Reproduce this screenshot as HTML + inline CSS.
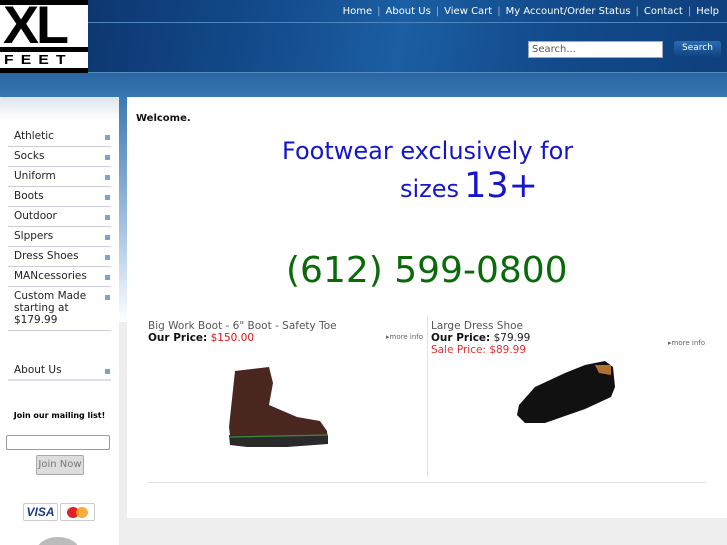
<!DOCTYPE html>
<html><head><style>
*{margin:0;padding:0;box-sizing:border-box}
html,body{width:727px;height:545px;overflow:hidden}
body{background:#eee;font-family:"DejaVu Sans","Liberation Sans",sans-serif;position:relative}
.hdr{position:absolute;left:0;top:0;width:727px;height:73px;background:linear-gradient(100deg,#0b2d63 0%,#134a8a 35%,#1b5ea3 55%,#134b8c 75%,#0f3f7c 100%)}
.band{position:absolute;left:0;top:73px;width:727px;height:24px;background:linear-gradient(#2a66a3,#3777b2)}
.hline{position:absolute;left:88px;top:22px;width:639px;height:1px;background:#4d86c0}
.hline2{position:absolute;left:88px;top:72px;width:639px;height:1px;background:#5a8fc4}
.logo{position:absolute;left:0;top:0;width:88px;height:73px;background:#fff;overflow:hidden}
.nav{position:absolute;right:8px;top:6px;color:#fff;font-size:10px;white-space:nowrap}
.nav span{color:#8fb3dc;margin:0 5px}
.srch{position:absolute;left:528px;top:41px;width:135px;height:17px;background:#fff;border:1px solid #9ab;font-size:10px;color:#555;padding:2px 3px}
.sbtn{position:absolute;left:674px;top:41px;width:47px;height:17px;background:linear-gradient(#2a6db3,#0e3f7c);border-radius:3px;color:#fff;font-size:9px;text-align:center;line-height:15px}
.side{position:absolute;left:0;top:97px;width:119px;height:448px;background:#fff;border-radius:4px 4px 0 0}
.sidetop{height:23px;background:linear-gradient(#dfe4ec,#fff);border-radius:4px 4px 0 0}
.strip{position:absolute;left:119px;top:97px;width:8px;height:225px;background:linear-gradient(#3a79b4,#a9c6e2 60%,#fff)}
.menu{position:absolute;left:8px;top:127px;width:103px}
.menu div{font-size:10.5px;color:#222;border-bottom:1px solid #ccd;padding:3px 6px 4px;height:20px;position:relative;line-height:12px}
.menu div:after{content:"";position:absolute;right:1px;top:8px;width:5px;height:5px;background:#7da2cf}
.main{position:absolute;left:127px;top:97px;width:600px;height:421px;background:#fff;border-radius:5px 0 0 0}
</style></head><body>
<div class="hdr"></div><div class="band"></div><div class="hline"></div><div class="hline2"></div>
<div class="logo">
<div style="position:absolute;left:0;top:0;width:88px;height:5px;background:#000"></div>
<div style="position:absolute;left:3px;top:-4px;font:bold 53px/60px 'Liberation Sans',sans-serif;color:#000;letter-spacing:-3px;transform:scaleX(1.02);transform-origin:left">XL</div>
<div style="position:absolute;left:0;top:47px;width:88px;height:5px;background:#000"></div>
<div style="position:absolute;left:4px;top:53px;font:900 13px/14px 'Liberation Sans',sans-serif;letter-spacing:6px;color:#000;transform:scaleX(1.2);transform-origin:left">FEET</div>
<div style="position:absolute;left:0;top:68px;width:88px;height:5px;background:#000"></div>
</div>
<div class="nav">Home<span>|</span>About Us<span>|</span>View Cart<span>|</span>My Account/Order Status<span>|</span>Contact<span>|</span>Help</div>
<div class="srch">Search...</div><div class="sbtn">Search</div>
<div class="side"><div class="sidetop"></div></div>
<div class="strip"></div>
<div class="menu">
<div>Athletic</div><div>Socks</div><div>Uniform</div><div>Boots</div><div>Outdoor</div><div>Slppers</div><div>Dress Shoes</div><div>MANcessories</div>
<div style="height:44px">Custom Made starting at $179.99</div>
</div>
<div class="menu" style="top:361px"><div style="border-bottom:2px solid #dde">About Us</div></div>
<div style="position:absolute;left:0;top:411px;width:119px;text-align:center;font:bold 8px 'DejaVu Sans',sans-serif">Join our mailing list!</div>
<div style="position:absolute;left:6px;top:435px;width:104px;height:15px;border:1px solid #999;border-radius:2px;background:#fff"></div>
<div style="position:absolute;left:36px;top:455px;width:48px;height:20px;border:1px solid #aaa;background:#ddd;border-radius:2px;font-size:10px;color:#777;text-align:center;line-height:18px">Join Now</div>
<div style="position:absolute;left:23px;top:503px;width:35px;height:18px;border:1px solid #ccc;border-radius:2px;font:bold italic 12px 'Liberation Sans',sans-serif;color:#1a3a8c;text-align:center;line-height:17px">VISA</div>
<div style="position:absolute;left:60px;top:503px;width:35px;height:18px;border:1px solid #ccc;border-radius:2px"><div style="position:absolute;left:6px;top:3px;width:12px;height:11px;border-radius:50%;background:#e0202a"></div><div style="position:absolute;left:15px;top:3px;width:12px;height:11px;border-radius:50%;background:#f6a01a;opacity:.85"></div></div>
<div style="position:absolute;left:36px;top:537px;width:44px;height:30px;border-radius:50%;background:#bbb"></div>
<div class="main">
<div style="position:absolute;left:9px;top:16px;font:bold 10px 'DejaVu Sans',sans-serif;color:#111">Welcome.</div>
<div style="position:absolute;left:155px;top:40px;font-size:24px;color:#1515cc;font-family:'DejaVu Sans',sans-serif;white-space:nowrap">Footwear exclusively for</div>
<div style="position:absolute;left:273px;top:69px;color:#1515cc;font-family:'DejaVu Sans',sans-serif;white-space:nowrap"><span style="font-size:24px">sizes</span> <span style="font-size:35px">13+</span></div>
<div style="position:absolute;left:159px;top:153px;font-size:36px;color:#0a6a0a;font-family:'DejaVu Sans',sans-serif;white-space:nowrap">(612) 599-0800</div>
<div style="position:absolute;left:21px;top:223px;font-size:10.5px;color:#555">Big Work Boot - 6" Boot - Safety Toe</div>
<div style="position:absolute;left:21px;top:235px;font-size:10.5px;color:#111"><b>Our Price:</b> <span style="color:#e01010">$150.00</span></div>
<div style="position:absolute;left:259px;top:236px;font-size:7px;color:#666">▸more info</div>
<div style="position:absolute;left:300px;top:220px;width:1px;height:160px;background:#e3e3e3"></div>
<div style="position:absolute;left:304px;top:223px;font-size:10.5px;color:#555">Large Dress Shoe</div>
<div style="position:absolute;left:304px;top:235px;font-size:10.5px;color:#222"><b style="color:#111">Our Price:</b> $79.99</div>
<div style="position:absolute;left:304px;top:247px;font-size:10.5px;color:#e03030">Sale Price: $89.99</div>
<div style="position:absolute;left:541px;top:242px;font-size:7px;color:#666">▸more info</div>
<svg style="position:absolute;left:100px;top:268px" width="118" height="90"><path d="M8 6 L42 2 L46 18 L42 40 L70 52 L93 56 L100 66 L101 78 L20 80 L4 78 L2 62 Z" fill="#4a2620"/><path d="M2 70 L101 70 L101 79 L60 82 L20 82 L3 80 Z" fill="#2a2a2a"/><path d="M3 72 L101 70" stroke="#3c8a3c" stroke-width="1.2"/></svg>
<svg style="position:absolute;left:388px;top:260px" width="110" height="75"><path d="M4 48 L20 30 L50 16 L70 8 L90 4 L98 10 L100 30 L96 40 L70 52 L30 66 L10 66 L2 58 Z" fill="#111"/><path d="M80 8 L96 8 L96 18 L84 16 Z" fill="#b07030"/></svg>
<div style="position:absolute;left:21px;top:385px;width:558px;height:1px;background:#e3e3e3"></div>
</div>
</body></html>
